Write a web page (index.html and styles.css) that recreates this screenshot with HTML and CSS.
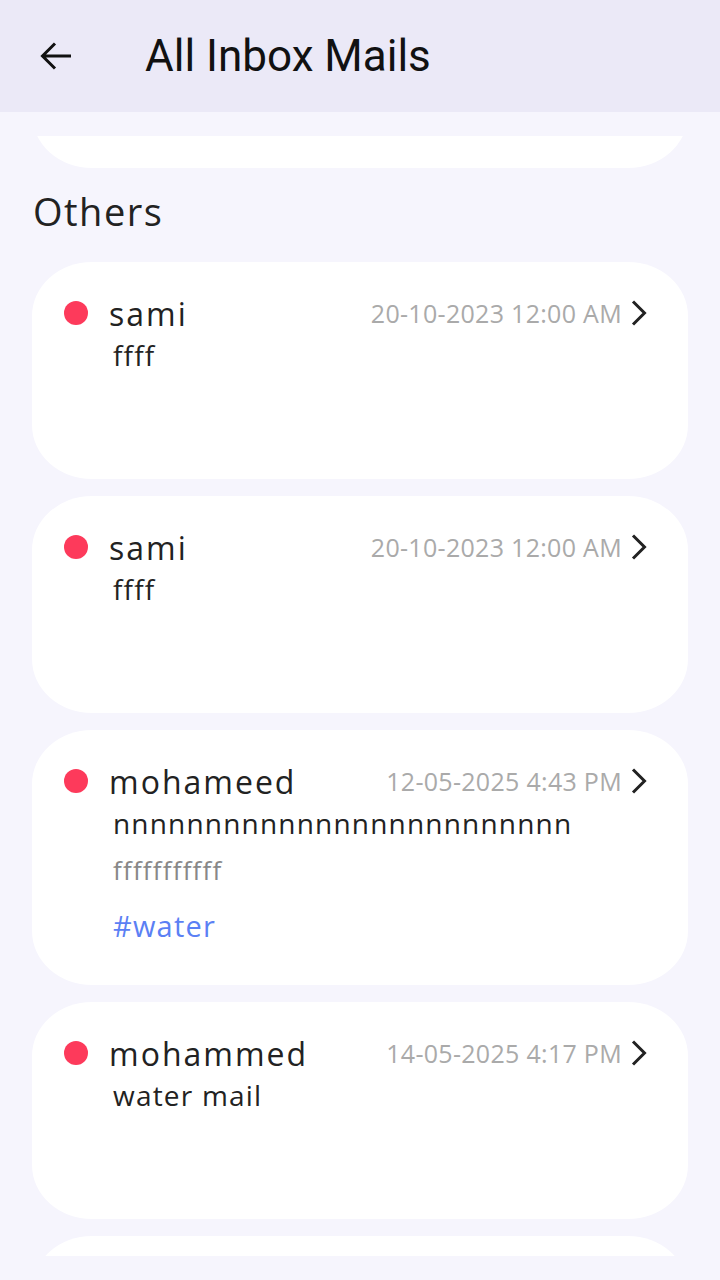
FILE: index.html
```html
<!DOCTYPE html>
<html>
<head>
<meta charset="utf-8">
<link rel="stylesheet" href="styles.css">
</head>
<body>
<header class="appbar">
  <svg class="back" width="32" height="32" viewBox="0 0 32 32"><path d="M31 16H3M15 3.5L2.5 16L15 28.5" fill="none" stroke="#111" stroke-width="3"/></svg>
  <h1 class="title">All Inbox Mails</h1>
</header>
<main class="screen">
  <div class="list">
    <div class="card card-prev"></div>
    <h2 class="section">Others</h2>
    <div class="card">
      <div class="row">
        <span class="dot"></span>
        <span class="name">sami</span>
        <span class="date">20-10-2023 12:00 AM</span>
        <svg class="chev" width="16" height="26" viewBox="0 0 16 26"><path d="M2 1.5L13.5 13L2 24.5" fill="none" stroke="#222" stroke-width="3"/></svg>
      </div>
      <div class="body">ffff</div>
    </div>
    <div class="card">
      <div class="row">
        <span class="dot"></span>
        <span class="name">sami</span>
        <span class="date">20-10-2023 12:00 AM</span>
        <svg class="chev" width="16" height="26" viewBox="0 0 16 26"><path d="M2 1.5L13.5 13L2 24.5" fill="none" stroke="#222" stroke-width="3"/></svg>
      </div>
      <div class="body">ffff</div>
    </div>
    <div class="card card-tall">
      <div class="row">
        <span class="dot"></span>
        <span class="name">mohameed</span>
        <span class="date">12-05-2025 4:43 PM</span>
        <svg class="chev" width="16" height="26" viewBox="0 0 16 26"><path d="M2 1.5L13.5 13L2 24.5" fill="none" stroke="#222" stroke-width="3"/></svg>
      </div>
      <div class="body">nnnnnnnnnnnnnnnnnnnnnnnnn</div>
      <div class="sub">fffffffffff</div>
      <div class="tag">#water</div>
    </div>
    <div class="card">
      <div class="row">
        <span class="dot"></span>
        <span class="name">mohammed</span>
        <span class="date">14-05-2025 4:17 PM</span>
        <svg class="chev" width="16" height="26" viewBox="0 0 16 26"><path d="M2 1.5L13.5 13L2 24.5" fill="none" stroke="#222" stroke-width="3"/></svg>
      </div>
      <div class="body">water mail</div>
    </div>
    <div class="card"></div>
  </div>
</main>
</body>
</html>
```
FILE: styles.css
```css
html, body {
  margin: 0;
  padding: 0;
}
body {
  width: 720px;
  height: 1280px;
  overflow: hidden;
  background: #f6f5fd;
  font-family: "Open Sans", "Noto Sans", sans-serif;
}
.appbar {
  height: 112px;
  background: #ebe9f7;
  display: flex;
  align-items: center;
  padding-left: 40px;
  box-sizing: border-box;
}
.back {
  flex: none;
}
.title {
  margin: 0 0 0 73px;
  font-family: Roboto, "Liberation Sans", sans-serif;
  font-weight: 400;
  font-size: 44px;
  color: #111;
}
.screen {
  padding-top: 24px;
  height: 1168px;
  box-sizing: border-box;
}
.list {
  height: 1120px;
  overflow: hidden;
  padding: 0 32px;
  display: flex;
  flex-direction: column;
}
.card {
  flex: none;
  background: #fff;
  border-radius: 60px / 54px;
  height: 217px;
  box-sizing: border-box;
  padding: 30px 41px 0 32px;
  margin-bottom: 17px;
}
.card-prev {
  margin-top: -185px;
  margin-bottom: 0;
}
.card-tall {
  height: 255px;
}
.section {
  flex: none;
  margin: 0;
  height: 94px;
  box-sizing: border-box;
  padding: 0 0 8px 1px;
  display: flex;
  align-items: center;
  font-weight: 400;
  font-size: 38px;
  color: #222;
  letter-spacing: 1.5px;
}
.row {
  display: flex;
  align-items: center;
  height: 42px;
}
.dot {
  width: 24px;
  height: 24px;
  border-radius: 50%;
  background: #fd3a5b;
  flex: none;
}
.name {
  margin-left: 21px;
  font-size: 32px;
  color: #222;
  flex: 1;
  letter-spacing: 2px;
}
.date {
  font-size: 25px;
  color: #aaa;
  letter-spacing: 0.3px;
}
.chev {
  flex: none;
  margin-left: 9px;
}
.body {
  margin-left: 49px;
  margin-top: 1px;
  font-size: 28px;
  line-height: 40px;
  color: #222;
  letter-spacing: 1.2px;
}
.sub {
  margin-left: 49px;
  margin-top: 7px;
  font-size: 26px;
  line-height: 40px;
  color: #888;
  letter-spacing: 1.2px;
}
.tag {
  margin-left: 49px;
  margin-top: 16px;
  font-size: 29px;
  line-height: 40px;
  color: #5b80f4;
  letter-spacing: 1.2px;
}
```
